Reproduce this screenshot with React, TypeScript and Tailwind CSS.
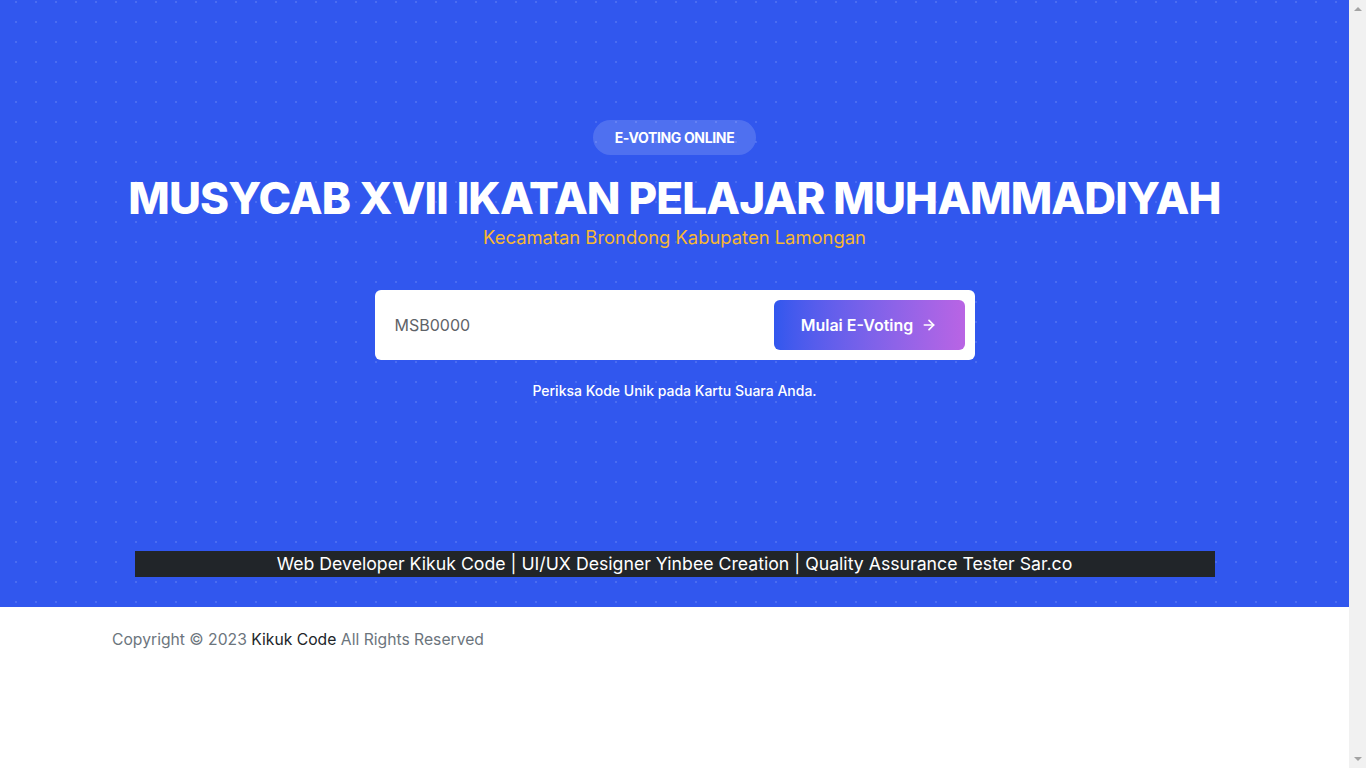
import { ArrowRight } from 'lucide-react';

export default function App() {
  return (
    <div className="flex h-[768px] w-full overflow-hidden font-['Inter',sans-serif]">
      <main className="flex-1 min-w-0">
        {/* Hero */}
        <section className="h-[607px] bg-[#3157ee] bg-[radial-gradient(circle,#4a6cf1_1px,transparent_1.5px)] bg-[size:20px_20px] bg-[position:6px_12px] flex flex-col items-center">
          <div className="mt-[120px] h-[35px] px-[22px] rounded-full bg-white/15 flex items-center">
            <span className="text-[14px] font-bold text-white tracking-tight">E-VOTING ONLINE</span>
          </div>
          <h1 className="mt-[17px] text-[44px] leading-[52px] font-extrabold text-white tracking-[-0.02em]">
            MUSYCAB XVII IKATAN PELAJAR MUHAMMADIYAH
          </h1>
          <p className="mt-[2px] text-[18.4px] leading-[22px] text-[#f7b731]">Kecamatan Brondong Kabupaten Lamongan</p>

          <div className="mt-[42px] w-[600px] h-[70px] bg-white rounded-md p-[10px] flex items-center gap-2">
            <input
              defaultValue="MSB0000"
              className="flex-1 min-w-0 h-full pl-[10px] text-[16px] text-[#5f6368] outline-none bg-transparent"
            />
            <button className="w-[191px] h-[50px] rounded-md bg-gradient-to-r from-[#3157ee] to-[#b964e4] text-white text-[16px] font-semibold flex items-center justify-center gap-2">
              Mulai E-Voting
              <ArrowRight size={16} strokeWidth={2.5} />
            </button>
          </div>

          <p className="mt-[20px] text-[14px] font-medium text-white">Periksa Kode Unik pada Kartu Suara Anda.</p>

          <div className="mt-[150px] w-[1080px] h-[26px] bg-[#212529] flex items-center justify-center">
            <span className="text-[17.7px] text-white">
              Web Developer Kikuk Code | UI/UX Designer Yinbee Creation | Quality Assurance Tester Sar.co
            </span>
          </div>
        </section>

        {/* Footer */}
        <footer className="bg-white px-[112px] pt-[21px]">
          <p className="text-[15.7px] text-[#6c757d]">
            Copyright © 2023 <span className="text-[#212529]">Kikuk Code</span> All Rights Reserved
          </p>
        </footer>
      </main>

      {/* scrollbar */}
      <aside className="w-[17px] h-full bg-[#f1f1f1] flex flex-col items-center justify-between py-[7px]">
        <div className="w-0 h-0 border-x-[4px] border-x-transparent border-b-[4px] border-b-[#a3a3a3]" />
        <div className="w-0 h-0 border-x-[4px] border-x-transparent border-t-[4px] border-t-[#a3a3a3]" />
      </aside>
    </div>
  );
}
